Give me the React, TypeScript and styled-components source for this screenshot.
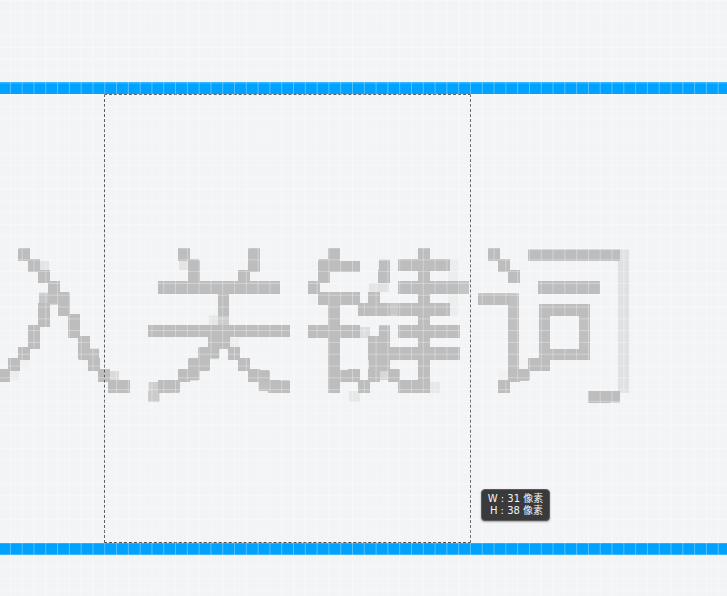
import React from "react";
import styled, { createGlobalStyle } from "styled-components";

const CELL = 11.8;
const PHASE_X = 9.9 - CELL; // grid phase relative to the text layer
const PHASE_Y = 0.2;

const Global = createGlobalStyle`
  html, body { margin: 0; padding: 0; background: #f3f4f6; }
  body { font-family: "Noto Sans CJK SC", "Noto Sans", sans-serif; }
`;

const Page = styled.div`
  position: relative;
  width: 727px;
  height: 596px;
  overflow: hidden;
  background: #f3f4f6;
  display: flex;
  flex-direction: column;
`;

const Spacer = styled.div<{ $h: number }>`
  height: ${(p) => p.$h}px;
  flex: none;
`;

const Ruler = styled.div`
  height: 12px;
  flex: none;
  background: #00a2ff;
`;

const Canvas = styled.div`
  position: relative;
  height: 449px;
  flex: none;
`;

const TextLayer = styled.div`
  width: 727px;
  height: 449px;
  padding-top: 135px;
  box-sizing: border-box;
  white-space: nowrap;
  text-indent: -198px;
  font-family: "Noto Sans CJK SC", "Noto Sans", sans-serif;
  font-weight: 300;
  font-size: 167px;
  line-height: 167px;
  color: #bdbdbd;
  filter: url(#pixelate);
`;

const Selection = styled.div`
  position: absolute;
  left: 104px;
  top: 0;
  width: 367px;
  height: 449px;
  border: 1px dashed #2b2b2b;
  box-sizing: border-box;
`;

const Tooltip = styled.div`
  position: absolute;
  left: 481px;
  top: 395px;
  width: 69px;
  height: 32px;
  box-sizing: border-box;
  padding-top: 3px;
  border-radius: 4px;
  background: #3a3a3a;
  border: 1px solid #5a5a5a;
  box-shadow: 0 1px 2px rgba(0, 0, 0, 0.35);
  color: #eef6ff;
  font-family: "DejaVu Sans", "Noto Sans CJK SC", sans-serif;
  font-size: 10px;
  line-height: 12px;
  text-align: center;
  z-index: 2;
`;

const TipLine = styled.div<{ $indent: number }>`
  padding-left: ${(p) => p.$indent}px;
  white-space: nowrap;
`;

const GridOverlay = styled.div`
  position: absolute;
  inset: 0;
  pointer-events: none;
  background-image:
    linear-gradient(to right, rgba(255, 255, 255, 0.32) 1px, transparent 1px),
    linear-gradient(to bottom, rgba(255, 255, 255, 0.32) 1px, transparent 1px);
  background-size: ${CELL}px ${CELL}px;
  background-position: 9.9px -0.2px;
  z-index: 1;
`;

const FilterDefs = styled.svg`
  position: absolute;
  width: 0;
  height: 0;
`;

export default function App() {
  return (
    <Page>
      <Global />
      <FilterDefs aria-hidden="true">
        <defs>
          <filter
            id="pixelate"
            filterUnits="userSpaceOnUse"
            primitiveUnits="userSpaceOnUse"
            x={-20}
            y={-20}
            width={780}
            height={500}
          >
            <feFlood x={PHASE_X + 4.9} y={PHASE_Y + 4.9} width={2} height={2} floodColor="#000" />
            <feComposite x={PHASE_X} y={PHASE_Y} width={CELL} height={CELL} />
            <feTile result="grid" />
            <feComposite in="SourceGraphic" in2="grid" operator="in" />
            <feMorphology operator="dilate" radius={5} />
          </filter>
        </defs>
      </FilterDefs>
      <Spacer $h={82} />
      <Ruler />
      <Canvas>
        <TextLayer>输入关键词</TextLayer>
        <Selection />
        <Tooltip>
          <TipLine $indent={0}>W : 31 像素</TipLine>
          <TipLine $indent={2}>H : 38 像素</TipLine>
        </Tooltip>
      </Canvas>
      <Ruler />
      <Spacer $h={41} />
      <GridOverlay />
    </Page>
  );
}
